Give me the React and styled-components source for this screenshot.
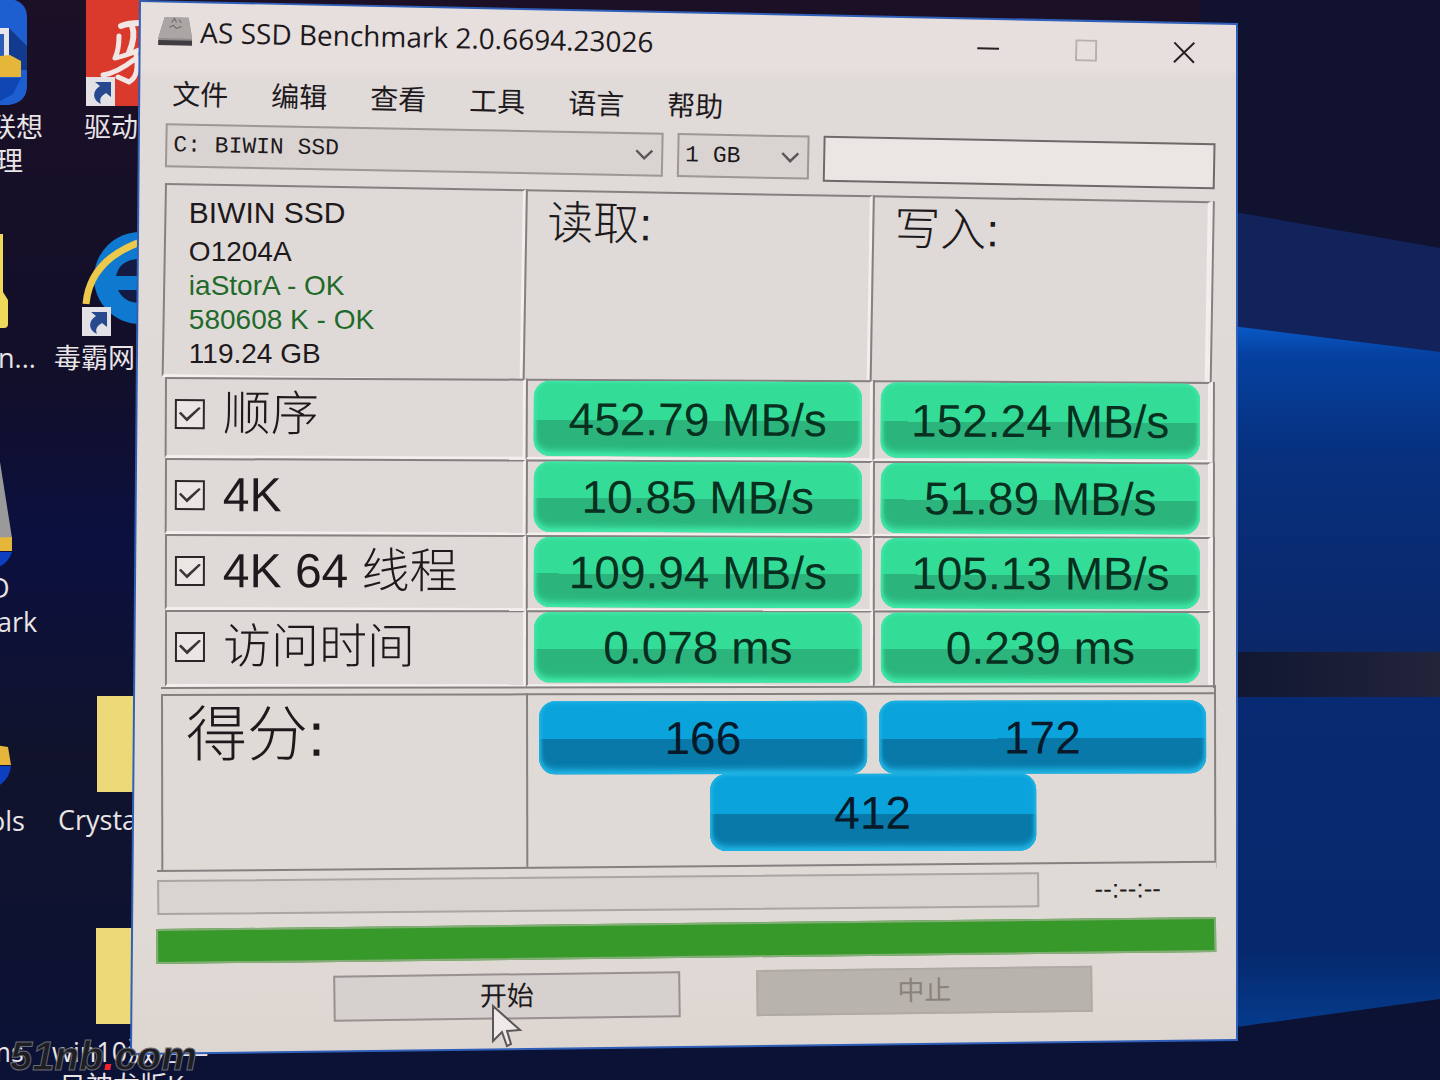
import styled, { createGlobalStyle, css } from 'styled-components'

const sans = `'Liberation Sans', 'Noto Sans CJK SC', sans-serif`
const ui = `'Open Sans', 'Noto Sans CJK SC', sans-serif`

const colors = {
  frame: '#2f5fb8',
  face: '#e0dad7',
  cell: '#dfdad7',
  line: '#858180',
  light: '#f3efed',
  ink: '#1d191c',
  ok: '#1f6a2b',
}

const GlobalStyle = createGlobalStyle`
  * {
    box-sizing: border-box;
  }

  body {
    margin: 0;
    background: #0f1130;
  }
`

const Desktop = styled.div`
  position: relative;
  display: grid;
  grid-template-columns: 130px minmax(0, 1fr) 202px;
  min-height: 100vh;
  overflow: hidden;
`

const Wallpaper = styled.svg`
  position: absolute;
  inset: 0;
  width: 100%;
  height: 100%;
`

const Shortcut = styled.a`
  position: absolute;
  top: ${({ $y }) => $y}px;
  left: ${({ $x }) => $x}px;
  display: flex;
  flex-direction: column;
  align-items: flex-start;
  color: #e9e4e6;
  font: 27px/34px ${ui};
  text-decoration: none;
  white-space: pre;

  svg {
    display: block;
    margin-left: ${({ $indent = 0 }) => $indent}px;
  }
`

const Window = styled.main`
  position: relative;
  grid-column: 2;
  display: flex;
  flex-direction: column;
  align-self: start;
  padding: 0 22px 31px 26px;
  background: ${colors.frame};
  clip-path: polygon(9px 0, 100% 23px, 100% calc(100% - 14px), 0 100%);
  font-family: ${sans};
  color: ${colors.ink};

  &::before {
    content: '';
    position: absolute;
    inset: 0 2px 2px;
    background: linear-gradient(#e6dfde 0 68px, #e0dad8 78px, ${colors.face} 88%, #ddd5d0);
    clip-path: polygon(9px 2px, 100% 25px, 100% calc(100% - 14px), 0 100%);
  }

  > * {
    position: relative;
  }
`

const tilted = css`
  transform: rotate(${({ $tilt }) => $tilt}deg);
  transform-origin: 0 0;
`

const TitleBar = styled.header`
  ${tilted}
  display: flex;
  align-items: center;
  height: 62px;
  padding-left: 3px;
  gap: 8px;
`

const Title = styled.h1`
  flex: 1;
  margin: 0;
  font: 28px/40px ${ui};
`

const WindowControls = styled.div`
  display: flex;
  margin-right: -18px;
`

const WindowButton = styled.button`
  display: grid;
  place-items: center;
  width: 98px;
  height: 40px;
  padding: 0;
  border: 0;
  background: none;
  color: ${({ disabled }) => (disabled ? '#b5afae' : '#262224')};
`

const Menu = styled.nav`
  ${tilted}
  display: flex;
  gap: 43px;
  height: 48px;
  padding: 13px 0 0 17px;
`

const MenuLink = styled.a`
  color: ${colors.ink};
  font: 28px/40px ${sans};
  text-decoration: none;
`

const Toolbar = styled.div`
  ${tilted}
  display: grid;
  grid-template-columns: 498px 132px minmax(0, 1fr);
  gap: 14px;
  height: 73px;
  padding: 13px 0 0 10px;
`

const Picker = styled.div`
  display: grid;
  align-items: center;
  height: 44px;

  > * {
    grid-area: 1 / 1;
  }

  svg {
    justify-self: end;
    margin-right: 8px;
    pointer-events: none;
  }
`

const Select = styled.select`
  appearance: none;
  width: 100%;
  height: 44px;
  padding: 0 6px;
  border: 2px solid #9c9896;
  border-radius: 0;
  background: #d9d4d2;
  color: ${colors.ink};
  font: 23px/36px 'Liberation Mono', monospace;
`

const TextBox = styled.input`
  width: 100%;
  height: 46px;
  border: 2px solid #6f6a6a;
  background: #ebe5e3;
  font: 23px/36px 'Liberation Mono', monospace;
`

const Results = styled.table`
  width: calc(100% - 14px);
  margin-left: 9px;
  border-collapse: separate;
  border-spacing: 0;
  table-layout: fixed;
`

const Row = styled.tr`
  ${tilted}
  height: ${({ $height }) => $height}px;

  > :first-child {
    width: 361px;
  }

  > :nth-child(2) {
    width: 347px;
  }

  > :last-child {
    box-shadow: 2px 0 ${colors.light}, 4px 0 ${colors.line};
  }
`

const cell = css`
  padding: 0;
  border: solid ${colors.light};
  border-width: 2px 3px 3px 2px;
  border-top-color: ${colors.line};
  border-left-color: ${colors.line};
  background: ${colors.cell};
  font-weight: 300;
  text-align: left;
  vertical-align: top;
`

const Cell = styled.td`
  ${cell}
  padding: 0 8px 0 6px;
`

const HeadCell = styled.th`
  ${cell}
  padding: 4px 20px 0;
  font-size: 46px;
  line-height: 54px;
`

const DriveCell = styled.th`
  ${cell}
  padding: 6px 0 0 22px;
`

const Drive = styled.div`
  ${tilted}
  font-size: 28px;
  font-weight: 400;
  line-height: 34px;
`

const DriveName = styled.div`
  font-size: 30px;
  line-height: 44px;
`

const Ok = styled.div`
  color: ${colors.ok};
`

const TestCell = styled.th`
  ${cell}
  padding: 4px 0 0 8px;
`

const TestLabel = styled.label`
  display: flex;
  align-items: center;
  gap: 18px;
  font-size: 48px;
  line-height: 62px;
  white-space: nowrap;
`

const CheckBox = styled.input`
  appearance: none;
  display: grid;
  place-items: center;
  width: 30px;
  height: 30px;
  margin: 0;
  border: 2px solid #2b2729;
  background: #ebe5e3;

  &:checked::before {
    content: '';
    width: 22px;
    height: 15px;
    background: #3a3638;
    clip-path: polygon(0 45%, 9% 34%, 36% 74%, 92% 0, 100% 10%, 37% 100%);
  }
`

const tones = {
  green: { top: '#34dd97', bottom: '#2bb57d', edge: '#3fe6a6', ink: '#08301f' },
  blue: { top: '#0ba3dc', bottom: '#0879a8', edge: '#1fb2e2', ink: '#081a2a' },
}

const Pill = styled.output`
  display: grid;
  place-items: center;
  height: ${({ $height = 70 }) => $height}px;
  border-radius: 16px;
  background: ${({ $tone }) => `linear-gradient(${tones[$tone].top} 52%, ${tones[$tone].bottom} 52%)`};
  box-shadow:
    inset 0 0 3px 2px ${({ $tone }) => tones[$tone].edge},
    inset 0 -5px 6px ${({ $tone }) => tones[$tone].edge};
  color: ${({ $tone }) => tones[$tone].ink};
  font: 46px/60px ${sans};
`

const Score = styled.section`
  ${tilted}
  display: grid;
  grid-template-columns: 365px minmax(0, 1fr);
  height: 183px;
  margin-left: 5px;
  border: solid ${colors.line};
  border-width: 2px 2px 0 0;
`

const ScorePane = styled.div`
  margin-top: 5px;
  border: solid ${colors.line};
  border-width: 2px 0 0 2px;
`

const ScoreTitle = styled.h2`
  margin: 0;
  padding-left: 23px;
  font: 300 61px/78px ${sans};
`

const ScoreGrid = styled.div`
  display: grid;
  grid-template-columns: 1fr 1fr;
  column-gap: 12px;
  padding: 6px 8px 0 11px;
`

const Total = styled.div`
  grid-column: 1 / 3;
  justify-self: center;
  width: 326px;
`

const ProgressRow = styled.div`
  ${tilted}
  display: grid;
  grid-template-columns: minmax(0, 1fr) 177px;
  align-items: center;
  margin: 0 0 14px 1px;
  padding-top: 8px;
  border-top: 2px solid ${colors.line};
  background: ${colors.face};
  font-size: 26px;
  line-height: 35px;
  text-align: center;
`

const Progress = styled.div`
  ${tilted}
  height: 35px;
  border: 2px solid ${({ $full }) => ($full ? '#84ad78' : '#aaa5a3')};
  background: ${({ $full }) => ($full ? '#36992a' : '#dad4d1')};
`

const Actions = styled.div`
  ${tilted}
  display: grid;
  grid-template-columns: 347px 336px;
  gap: 76px;
  padding: 14px 0 0 177px;
`

const Action = styled.button`
  height: 46px;
  padding: 0;
  border: 2px solid #979291;
  background: #d6d0ce;
  color: ${colors.ink};
  font: 27px/36px ${sans};

  &:disabled {
    border-color: #b0aaa6;
    background: #b9b3ae;
    color: #88827f;
  }
`

const Cursor = styled.svg`
  position: absolute;
  top: 1004px;
  left: 491px;
`

const Watermark = styled.div`
  position: absolute;
  top: 1034px;
  left: 10px;
  color: #1d1d24;
  font: italic 700 40px/44px ${sans};
  -webkit-text-stroke: 1px #6a6a70;

  span {
    color: #f0242c;
    -webkit-text-stroke: 0;
  }
`

const menus = ['文件', '编辑', '查看', '工具', '语言', '帮助']

const tests = [
  { id: 'seq', label: '顺序', read: '452.79 MB/s', write: '152.24 MB/s', height: 81, pill: 75, tilt: 0.27 },
  { id: '4k', label: '4K', read: '10.85 MB/s', write: '51.89 MB/s', height: 76, tilt: 0.24 },
  { id: '4k64', label: '4K 64 线程', read: '109.94 MB/s', write: '105.13 MB/s', height: 76, tilt: 0.16 },
  { id: 'acc', label: '访问时间', read: '0.078 ms', write: '0.239 ms', height: 77, tilt: 0.05 },
]

const Chevron = () => (
  <svg width="22" height="12" viewBox="0 0 22 12" fill="none" stroke="#5b5657" strokeWidth="2.4">
    <path d="M3 2l8 8 8-8" />
  </svg>
)

const ShortcutArrow = ({ x, y }) => (
  <g transform={`translate(${x} ${y})`}>
    <rect width="29" height="29" fill="#e4e1e6" />
    <path d="M9 5h16v15l-5-4c-5 3-7 6-5 11C6 23 6 14 14 9z" fill="#26488e" />
  </g>
)

const Folder = () => (
  <svg width="70" height="107">
    <rect width="70" height="96" fill="#ecd977" />
  </svg>
)

const DesktopIcons = () => (
  <>
    <Shortcut href="#manager" $x={-11} $y={0}>
      <svg width="38" height="110">
        <path d="M0 0h26q12 4 12 18v68q0 16-18 19H0z" fill="#1d5fd0" />
        <path d="M20 28l18 18v24H20z" fill="#123a8e" />
        <path d="M0 28h20v30H0z" fill="#e8e6ea" />
        <path d="M11 34h4v22h-4z" fill="#2a5cb8" />
        <path d="M0 57l21-2 11 6v16H0z" fill="#e6b63a" />
        <path d="M0 78h32l-8 16-13 7H0z" fill="#0f46b4" />
      </svg>
      {'联想\n 理'}
    </Shortcut>
    <Shortcut href="#driver" $x={84} $y={0} $indent={2}>
      <svg width="60" height="110">
        <path d="M0 0h60v106H0z" fill="#da3a2c" />
        <g fill="none" stroke="#f1e6e4" strokeWidth="6" strokeLinecap="round" strokeLinejoin="round">
          <path d="M35 26q8-3 18-3M46 26q4 10-3 27" />
          <path d="M33 36q0 14-4 22 10-2 24-8" strokeWidth="5" />
          <path d="M17 75q14-2 32-16M50 54q4 22-7 28l-11-5" strokeWidth="5" />
        </g>
        <ShortcutArrow x={0} y={77} />
      </svg>
      驱动
    </Shortcut>
    <Shortcut href="#ini" $x={-2} $y={232}>
      <svg width="12" height="109">
        <path d="M0 2h5v58l5 8v24q0 4-4 4H0z" fill="#efd95a" />
      </svg>
      n...
    </Shortcut>
    <Shortcut href="#browser" $x={54} $y={232} $indent={28}>
      <svg width="64" height="109">
        <circle cx="58" cy="46" r="46" fill="#0f78cf" />
        <path d="M34 44q4-17 24-17h6v17zM36 58h28v12q-20 4-28-12z" fill="#141a42" />
        <path d="M4 72Q8 26 64 8" fill="none" stroke="#ecc94b" strokeWidth="7" />
        <ShortcutArrow x={0} y={75} />
      </svg>
      毒霸网
    </Shortcut>
    <Shortcut href="#benchmark" $x={-10} $y={450}>
      <svg width="24" height="121">
        <path d="M0 0l10 12 12 76H0z" fill="#9a9a9a" />
        <path d="M0 88l22-1v14H0z" fill="#e6b63a" />
        <path d="M0 102h22q-4 14-22 18z" fill="#0e3fc0" />
      </svg>
      {'D\n ark'}
    </Shortcut>
    <Shortcut href="#tools" $x={-11} $y={740}>
      <svg width="24" height="64">
        <path d="M0 4l19 3 3 18H0z" fill="#e6b63a" />
        <path d="M0 26h22q-2 18-22 24z" fill="#0e3fc0" />
      </svg>
      ols
    </Shortcut>
    <Shortcut href="#crystal" $x={58} $y={696} $indent={39}>
      <Folder />
      Crysta
    </Shortcut>
    <Shortcut href="#win10" $x={52} $y={928} $indent={44}>
      <Folder />
      {'win10激活—\n 日神龙版K'}
    </Shortcut>
    <Shortcut href="#ms" $x={-14} $y={1035}>
      ms
    </Shortcut>
  </>
)

export default function App() {
  return (
    <Desktop>
      <GlobalStyle />
      <Wallpaper viewBox="0 0 1440 1080" preserveAspectRatio="none">
        <defs>
          <linearGradient id="night" x2="0" y2="1">
            <stop offset="0" stopColor="#1b1026" />
            <stop offset=".35" stopColor="#120f2a" />
            <stop offset=".5" stopColor="#0b103f" />
            <stop offset=".7" stopColor="#11132c" />
            <stop offset="1" stopColor="#0b1236" />
          </linearGradient>
          <linearGradient id="beam" x2="0" y2="1">
            <stop offset="0" stopColor="#0a5ccc" />
            <stop offset=".1" stopColor="#0541a0" />
            <stop offset=".4" stopColor="#07307e" />
            <stop offset="1" stopColor="#0b2768" />
          </linearGradient>
          <linearGradient id="stripe">
            <stop offset="0" stopColor="#0e1430" />
            <stop offset="1" stopColor="#22243a" />
          </linearGradient>
          <linearGradient id="floor" x2="0" y2="1">
            <stop offset="0" stopColor="#082a72" />
            <stop offset=".75" stopColor="#06286c" />
            <stop offset="1" stopColor="#053c8e" />
          </linearGradient>
        </defs>
        <rect width="1440" height="1080" fill="url(#night)" />
        <path d="M1200 0h240v250l-240-42z" fill="#10122f" />
        <path d="M1200 206l240 42v110l-240-36z" fill="#12235c" />
        <path d="M1200 322l240 30v302h-240z" fill="url(#beam)" />
        <path d="M1200 652h240v45h-240z" fill="url(#stripe)" />
        <path d="M1200 697h240v302l-240 33z" fill="url(#floor)" />
      </Wallpaper>
      <DesktopIcons />
      <Window>
        <TitleBar $tilt={1.2}>
          <svg width="34" height="30" viewBox="0 0 34 30">
            <path d="M6 1h24l4 21v6H0v-6z" fill="#8f8c8b" />
            <path d="M6 1h24l4 21H0z" fill="#a9a6a4" />
            <path d="M0 24h34v5H0z" fill="#3f3c42" />
            <path d="M13 6l3-4 2 4M20 3l3 3M11 11l4-2 3 3 5-2" stroke="#6c696a" fill="none" />
          </svg>
          <Title>AS SSD Benchmark 2.0.6694.23026</Title>
          <WindowControls>
            <WindowButton aria-label="Minimize">
              <svg width="22" height="22" stroke="currentColor" strokeWidth="2">
                <path d="M0 11h22" />
              </svg>
            </WindowButton>
            <WindowButton aria-label="Maximize" disabled>
              <svg width="22" height="22" fill="none" stroke="currentColor" strokeWidth="2">
                <path d="M1 1h20v20H1z" />
              </svg>
            </WindowButton>
            <WindowButton aria-label="Close">
              <svg width="22" height="22" stroke="currentColor" strokeWidth="2">
                <path d="M1 1l20 20M21 1L1 21" />
              </svg>
            </WindowButton>
          </WindowControls>
        </TitleBar>
        <Menu $tilt={1.3}>
          {menus.map((item) => (
            <MenuLink key={item} href="#menu">
              {item}
            </MenuLink>
          ))}
        </Menu>
        <Toolbar $tilt={1.1}>
          <Picker>
            <Select aria-label="Drive">
              <option>C: BIWIN SSD</option>
            </Select>
            <Chevron />
          </Picker>
          <Picker>
            <Select aria-label="Size">
              <option>1 GB</option>
            </Select>
            <Chevron />
          </Picker>
          <TextBox aria-label="Note" />
        </Toolbar>
        <Results>
          <thead>
            <Row $height={194} $tilt={1}>
              <DriveCell>
                <Drive $tilt={-1}>
                  <DriveName>BIWIN SSD</DriveName>
                  <div>O1204A</div>
                  <Ok>iaStorA - OK</Ok>
                  <Ok>580608 K - OK</Ok>
                  <div>119.24 GB</div>
                </Drive>
              </DriveCell>
              <HeadCell>读取:</HeadCell>
              <HeadCell>写入:</HeadCell>
            </Row>
          </thead>
          <tbody>
            {tests.map(({ id, label, read, write, height, pill, tilt }) => (
              <Row key={id} $height={height} $tilt={tilt}>
                <TestCell>
                  <TestLabel>
                    <CheckBox type="checkbox" defaultChecked />
                    {label}
                  </TestLabel>
                </TestCell>
                <Cell>
                  <Pill $tone="green" $height={pill}>{read}</Pill>
                </Cell>
                <Cell>
                  <Pill $tone="green" $height={pill}>{write}</Pill>
                </Cell>
              </Row>
            ))}
          </tbody>
        </Results>
        <Score $tilt={-0.1}>
          <ScorePane>
            <ScoreTitle>得分:</ScoreTitle>
          </ScorePane>
          <ScorePane>
            <ScoreGrid>
              <Pill $tone="blue" $height={73}>166</Pill>
              <Pill $tone="blue" $height={73}>172</Pill>
              <Total>
                <Pill $tone="blue" $height={77}>412</Pill>
              </Total>
            </ScoreGrid>
          </ScorePane>
        </Score>
        <ProgressRow $tilt={-0.5}>
          <Progress $tilt={0} />
          <span>--:--:--</span>
        </ProgressRow>
        <Progress $full $tilt={-0.65} />
        <Actions $tilt={-0.75}>
          <Action>开始</Action>
          <Action disabled>中止</Action>
        </Actions>
      </Window>
      <Cursor width="32" height="46" viewBox="0 0 32 46">
        <path d="M2 2v35l9-9 5 14 4-2-4-13 13-1z" fill="#eeeaea" stroke="#5b5657" strokeWidth="2" />
      </Cursor>
      <Watermark>
        51nb<span>.</span>com
      </Watermark>
    </Desktop>
  )
}
